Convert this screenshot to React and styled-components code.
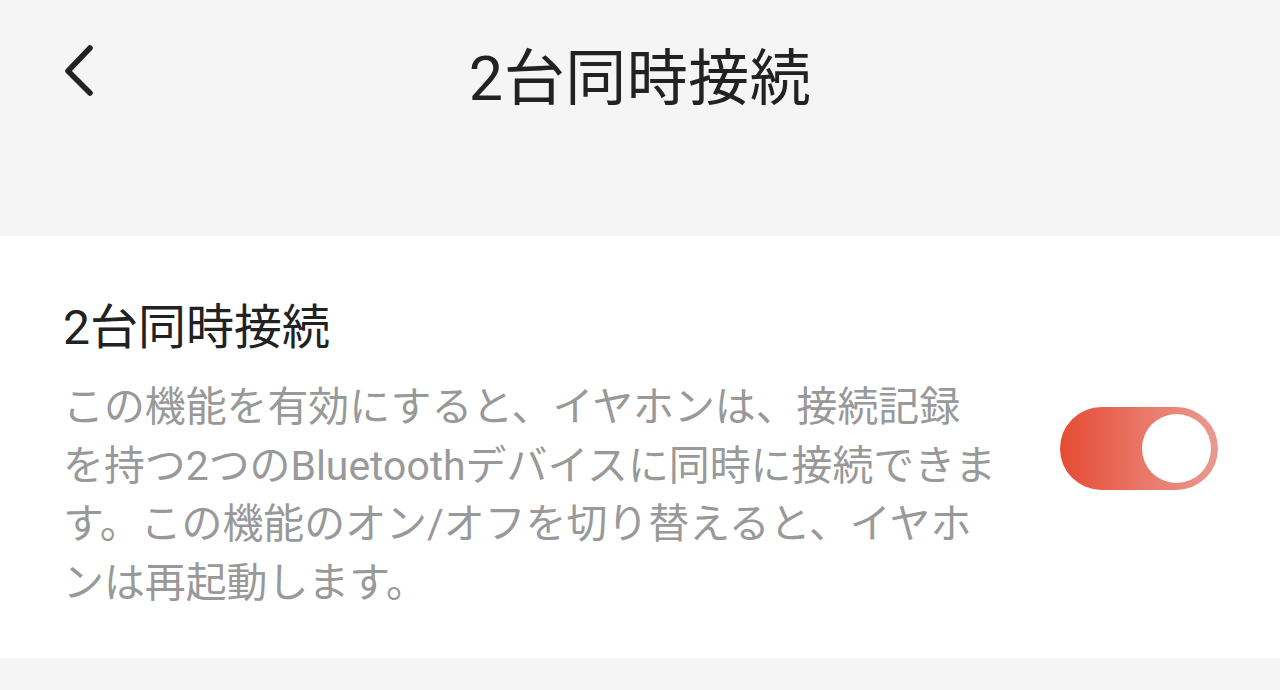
import React, { useState } from "react";
import styled, { createGlobalStyle } from "styled-components";

const GlobalStyle = createGlobalStyle`
  html, body {
    margin: 0;
    padding: 0;
    background: #f5f5f5;
    font-family: Roboto, "Noto Sans CJK JP", sans-serif;
  }
`;

const App = () => {
  const [enabled, setEnabled] = useState(true);

  return (
    <Page>
      <GlobalStyle />
      <Header>
        <TopBar>
          <BackButton aria-label="戻る">
            <svg width="40" height="60" viewBox="0 0 40 60">
              <path
                d="M27 10 L5 33 L27 55"
                fill="none"
                stroke="#222222"
                strokeWidth="5.5"
                strokeLinecap="round"
                strokeLinejoin="round"
              />
            </svg>
          </BackButton>
          <Title>2台同時接続</Title>
        </TopBar>
      </Header>

      <Section>
        <Row>
          <TextColumn>
            <ItemTitle>2台同時接続</ItemTitle>
            <Description>
              この機能を有効にすると、イヤホンは、接続記録を持つ2つのBluetoothデバイスに同時に接続できます。この機能のオン/オフを切り替えると、イヤホンは再起動します。
            </Description>
          </TextColumn>
          <Toggle on={enabled} onClick={() => setEnabled(!enabled)}>
            <Knob on={enabled} />
          </Toggle>
        </Row>
      </Section>
    </Page>
  );
};

export default App;

// style
const Page = styled.div`
  width: 1280px;
  min-height: 690px;
  background: #f5f5f5;
`;

const Header = styled.header`
  height: 236px;
  background: #f5f5f5;
`;

const TopBar = styled.div`
  position: relative;
  height: 146px;
  display: flex;
  align-items: center;
  justify-content: center;
`;

const BackButton = styled.button`
  position: absolute;
  left: 63px;
  top: 38px;
  width: 40px;
  height: 60px;
  padding: 0;
  border: none;
  background: transparent;
  display: flex;
  cursor: pointer;
`;

const Title = styled.h1`
  margin: 0;
  font-size: 61px;
  font-weight: 400;
  color: #222222;
  letter-spacing: 0.5px;
`;

const Section = styled.section`
  background: #ffffff;
  padding: 62px 62px 46px 63px;
`;

const Row = styled.div`
  display: flex;
  align-items: center;
  justify-content: space-between;
`;

const TextColumn = styled.div`
  width: 936px;
  display: flex;
  flex-direction: column;
  gap: 20px;
`;

const ItemTitle = styled.div`
  font-size: 48px;
  line-height: 60px;
  color: #222222;
`;

const Description = styled.p`
  margin: 0;
  font-size: 40.9px;
  line-height: 58.5px;
  color: #999999;
  line-break: strict;
`;

const Toggle = styled.button`
  width: 158px;
  height: 83px;
  margin-bottom: 14px;
  border: none;
  border-radius: 42px;
  padding: 0 7px;
  display: flex;
  align-items: center;
  justify-content: ${(props) => (props.on ? "flex-end" : "flex-start")};
  background: ${(props) =>
    props.on
      ? "linear-gradient(90deg, #e64b33 0%, #e9796a 55%, #e89b90 100%)"
      : "#d9d9d9"};
  cursor: pointer;
`;

const Knob = styled.span`
  width: 69px;
  height: 69px;
  border-radius: 50%;
  background: #ffffff;
`;
